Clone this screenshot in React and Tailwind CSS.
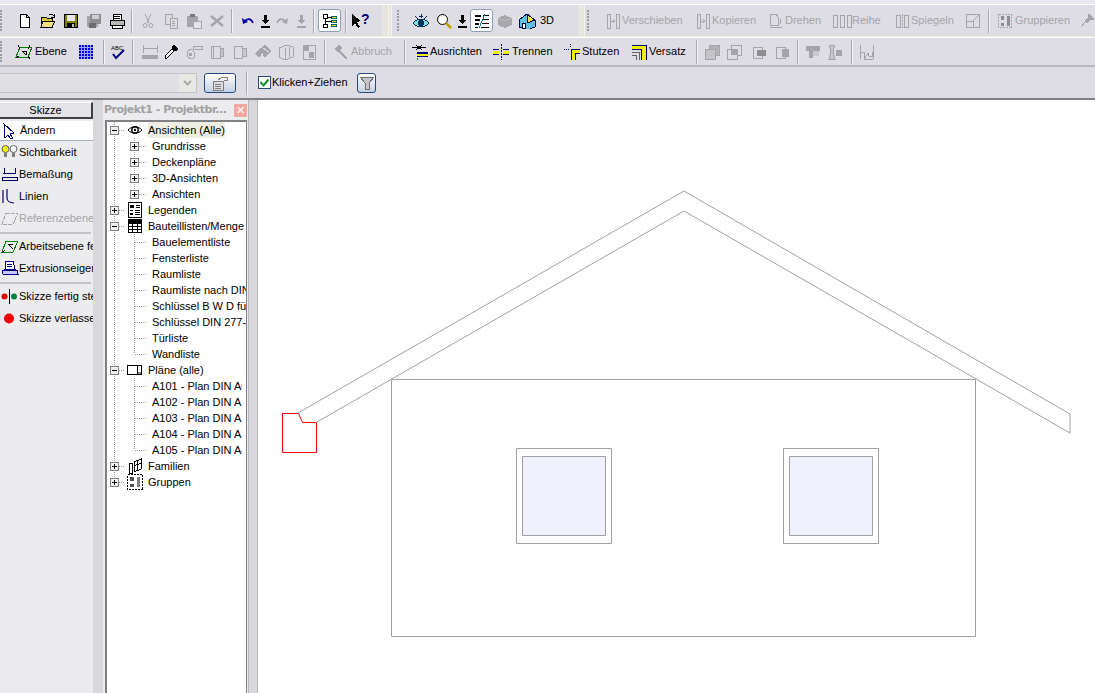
import React from "react";

const DIS = "#a4a4aa";
const DIS2 = "#c9c9cd";

const Svg = ({ children, w = 16, h = 16, smooth }) => (
  <svg width={w} height={h} viewBox={`0 0 ${w} ${h}`} shapeRendering={smooth ? "auto" : "crispEdges"} className="block shrink-0">
    {children}
  </svg>
);

// toolbar icons, roughly pixel drawn
const icons = {
  newFile: <Svg><path d="M3.5 1.5h6l3 3v10h-9z" fill="#fff" stroke="#000" /><path d="M9.5 1.5v3h3" fill="none" stroke="#000" /></Svg>,
  open: <Svg><path d="M1 4h5l1 1h5v9H1z" fill="#e0c040" stroke="#000" /><path d="M3 8h12l-3 6H1z" fill="#f0e080" stroke="#000" /><path d="M9 2l3-1 2 2M14 1v3h-3" fill="none" stroke="#000" /></Svg>,
  save: <Svg><path d="M1.5 1.5h13v13h-13z" fill="#808000" stroke="#000" /><path d="M4 2h8v6H4z" fill="#e8e8e8" /><path d="M4 10h8v5H4z" fill="#000" /><path d="M9 11h2v3H9z" fill="#c0c0c0" /></Svg>,
  saveAll: <Svg><path d="M1 3h11v11H1z" fill={DIS} /><path d="M4 1h11v10H4z" fill="#8e8e92" /><path d="M6 2h7v4H6z" fill="#cfcfd3" /><path d="M3 10h7v5H3z" fill="#6f6f73" /></Svg>,
  print: <Svg><path d="M4 1h8v6H4z" fill="#fff" stroke="#000" /><path d="M1 7h14v5H1z" fill="#b8b8b8" stroke="#000" /><path d="M3 12h10v3H3z" fill="#fff" stroke="#000" /><path d="M5 3h6M5 5h6" stroke="#000" /></Svg>,
  cut: <Svg smooth><path d="M5 1l4 9M11 1L7 10" stroke={DIS} fill="none" /><circle cx="5" cy="12.5" r="2" fill="none" stroke={DIS} /><circle cx="11" cy="12.5" r="2" fill="none" stroke={DIS} /></Svg>,
  copy: <Svg><path d="M2 1h7v10H2z" fill="#dcdce0" stroke={DIS} /><path d="M7 5h7v10H7z" fill="#dcdce0" stroke={DIS} /><path d="M9 8h3M9 10h3M9 12h3" stroke={DIS} /></Svg>,
  paste: <Svg><path d="M1 3h11v11H1z" fill={DIS} /><path d="M4 1h5v3H4z" fill="#77777b" /><path d="M7 8h8v7H7z" fill="#e4e4e8" stroke={DIS} /></Svg>,
  del: <Svg smooth><path d="M2 3l12 10M14 3L2 13" stroke={DIS} strokeWidth="2.4" /></Svg>,
  undo: <Svg w={14} smooth><path d="M2 5l1 6 5-2" fill="#0000a0" /><path d="M4 9c3-4 7-4 9 1" fill="none" stroke="#0000a0" strokeWidth="1.6" /></Svg>,
  down: <Svg w={11}><path d="M4 2h3v5h3L5.5 11 1 7h3zM1 13h9v1.5H1z" fill="#000" /></Svg>,
  redo: <Svg w={14} smooth><path d="M12 5l-1 6-5-2" fill={DIS} /><path d="M10 9C7 5 3 5 1 10" fill="none" stroke={DIS} strokeWidth="1.6" /></Svg>,
  downOff: <Svg w={11}><path d="M4 2h3v5h3L5.5 11 1 7h3zM1 13h9v1.5H1z" fill={DIS} /></Svg>,
  browser: <Svg><path d="M1.5 1.5h4v4h-4zM1.5 11h4v3.500h-4z" fill="#fff" stroke="#000" /><path d="M9.500 3.500h5v2h-5zM9.500 7.500h5v2h-5zM9.500 11.500h5v2h-5z" fill="#e8e840" stroke="#006060" /><path d="M3.500 5.500v6M3.500 8.500h6M5.500 4.500h4" stroke="#000" /></Svg>,
  help: <Svg w={20}><path d="M1 1l9 7-4 1 3 5-2 1-3-5-3 3z" fill="#000" /><text x="10" y="11" fontSize="14" fontWeight="700" fontFamily="Liberation Sans" fill="#000080">?</text></Svg>,
  eye: <Svg w={18}><path d="M1 10c4-5 12-5 16 0-4 5-12 5-16 0z" fill="#80e0e0" stroke="#003060" /><circle cx="9" cy="10" r="3" fill="#003060" /><path d="M9 1v4M3 3l3 3M15 3l-3 3M7 3h4" stroke="#003060" /></Svg>,
  zoom: <Svg smooth><circle cx="6.500" cy="6.500" r="5" fill="#fff" stroke="#000" /><path d="M10 10l5 5" stroke="#c0a000" strokeWidth="2.500" /></Svg>,
  detail: <Svg><path d="M1 2h6v2H1zM1 6h5v2H1zM1 10h4v2H1zM1 14h3v1H1z" fill="#000" /><path d="M9 2h6M9 6h6M8 10h7M7 14h8" stroke="#000" /><path d="M11 1L5 15" stroke="#008080" /></Svg>,
  cube: <Svg><path d="M8 2l7 3v7l-7 3-7-3V5z" fill="#a8a8ac" /><path d="M1 5l7 3 7-3" stroke="#bcbcc0" fill="none" /></Svg>,
  house: <Svg w={18}><path d="M9 1l8 6v7l-8 3-8-3V7z" fill="#60c0e0" stroke="#000040" /><path d="M9 1l8 6-8 3z" fill="#f0e050" stroke="#000040" /><path d="M4 10h3v5H4z" fill="#fff" stroke="#000040" /></Svg>,
  move: <Svg><path d="M2 1h3v14H2zM11 1h3v14h-3z" fill="none" stroke={DIS} /><path d="M6 8h4M8 6l2 2-2 2" stroke={DIS} fill="none" /></Svg>,
  rotate: <Svg><path d="M2 1h6l2 3v8H2z" fill="none" stroke={DIS} /><path d="M2 14h12M12 6v5" stroke={DIS} /></Svg>,
  array: <Svg w={20}><path d="M1 2h4v12H1zM8 2h4v12H8zM15 2h4v12h-4z" fill="none" stroke={DIS} /></Svg>,
  mirror: <Svg><path d="M2 2h4v12H2zM10 2h4v12h-4z" fill="none" stroke={DIS} /><path d="M8 1v14" stroke={DIS} strokeDasharray="2 1" /></Svg>,
  scale: <Svg><path d="M1.500 1.500h13v13h-13zM1.500 8.500h7v6" fill="none" stroke={DIS} /><path d="M8 8l6-6" stroke={DIS} /></Svg>,
  group: <Svg><path d="M1.500 1.500h13v13h-13z" fill="none" stroke={DIS} strokeDasharray="2 1" /><path d="M4 3h3v4H4zM10 3h3v10h-3zM4 10h3v3H4z" fill="#8e8e92" /></Svg>,
  pin: <Svg><path d="M10 1l5 5-4 1-3 3-2-2 3-3zM6 9l-4 5" stroke={DIS} fill={DIS} /></Svg>,
  plane: <Svg w={18}><path d="M5 3h12l-4 10H1z" fill="none" stroke="#008000" /><path d="M3 1l2 4M15 1l-2 4M1 14l3-2M15 15l-2-3" stroke="#000" /><path d="M7 7h4v4" fill="none" stroke="#000" /><path d="M7 7l4 4" stroke="#000" /></Svg>,
  grid: <Svg><path d="M1 1h14v14H1z" fill="#0000e0" /><path d="M3.500 1v14M6.500 1v14M9.500 1v14M12.500 1v14M1 3.500h14M1 6.500h14M1 9.500h14M1 12.500h14" stroke="#a0a0ff" /></Svg>,
  spell: <Svg smooth><text x="1" y="6" fontSize="6" fontFamily="Liberation Sans" fill="#000">ABC</text><path d="M3 10l3 4 8-8" fill="none" stroke="#000080" strokeWidth="2" /></Svg>,
  dim: <Svg w={18}><path d="M1 11h16v4H1z" fill={DIS} /><path d="M2 1v8M16 1v8M2 4h14" stroke={DIS} /></Svg>,
  dropper: <Svg><path d="M11 1l4 4-3 2-3-3zM9 5l2 2-7 7H2v-2z" fill="#fff" stroke="#000" /><path d="M11 2l3 3-2 2-3-3z" fill="#000" /></Svg>,
  wallA: <Svg w={18}><path d="M2 8l4-3 3 3v6l-3 1-3-2zM8 2h9v3H8z" fill="none" stroke={DIS} /><path d="M4 9h3v3H4z" fill={DIS} /></Svg>,
  wallB: <Svg><path d="M2 2h9v12H2z" fill="none" stroke={DIS} /><path d="M4 2v12M11 4h3v8h-3z" stroke={DIS} fill="#c4c4c8" /></Svg>,
  wallC: <Svg><path d="M2 2h8v12H2z" fill="none" stroke={DIS} /><path d="M10 4h4v8h-4z" fill={DIS2} stroke={DIS} /></Svg>,
  wallD: <Svg w={18}><path d="M1 9l6-5 3 3-5 7zM8 3l3-2 6 6-6 7-2-2z" fill={DIS} /><path d="M9 4l6 4" stroke="#dedde3" /></Svg>,
  wallE: <Svg w={18}><path d="M2 4l8-3 6 2v10l-8 3-6-3z" fill="none" stroke={DIS} /><path d="M8 4v11M12 3v10" stroke={DIS} /></Svg>,
  wallF: <Svg><path d="M2 1h12v14H2z" fill="none" stroke={DIS} /><path d="M3 2h5v5H3zM8 8h5v6H8z" fill={DIS} /></Svg>,
  hammer: <Svg><path d="M1 5l5-4 3 3-4 4zM6 6l8 8-1.500 1.500-8-8" fill={DIS} /></Svg>,
  align: <Svg><path d="M0 3.500h14M4 1l3 2.500L4 6M10 1L7 3.500 10 6" stroke="#000" fill="none" /><path d="M5 8h11v1.500H5zM5 11.500h11V13H5z" fill="#000080" /><path d="M5 9.500h11v2H5z" fill="#f0f000" /><path d="M5 14v2" stroke="#008000" /></Svg>,
  split: <Svg><path d="M0 5.500h6M0 10.500h6M10 5.500h6M10 10.500h6" stroke="#000080" /><path d="M0 6.500h6v3H0zM10 6.500h6v3h-6z" fill="#f0f000" /><path d="M8 0v16" stroke="#000080" strokeDasharray="2 1" /></Svg>,
  trim: <Svg><path d="M0 5.500h5M6.500 0v4" stroke="#000080" strokeDasharray="1 1" /><path d="M7 5h9v1H7zM7 9h9v1H7zM7 5h1v11H7zM11 10h1v6h-1z" fill="#000080" /><path d="M8 6h8v3H8zM8 9h3v7H8z" fill="#f0f000" /></Svg>,
  offset: <Svg><path d="M1 1h15v15h-5V6H1z" fill="#f0f000" /><path d="M1 1.500h14.500V16M1 5.500h9.500V16" fill="none" stroke="#000080" /><path d="M1 8.500h7.500V16M1 11.500h4.500V16" fill="none" stroke="#606060" /></Svg>,
  joinA: <Svg><path d="M5 1h10v10H5z" fill="#b4b4b8" stroke={DIS} /><path d="M1 5h10v10H1z" fill="#c4c4c8" stroke={DIS} /></Svg>,
  joinB: <Svg><path d="M5 1h10v10H5z" fill="none" stroke={DIS} /><path d="M1 5h10v10H1z" fill="#dedde3" stroke={DIS} /><path d="M5 5h6v6H5z" fill={DIS} /></Svg>,
  joinC: <Svg><path d="M2 3h9v11H2z" fill="#dedde3" stroke={DIS} /><path d="M6 6h9v6H6z" fill="#8e8e92" /></Svg>,
  joinD: <Svg><path d="M2 3h9v11H2z" fill="#dedde3" stroke={DIS} /><path d="M8 5h7v8H8z" fill={DIS} /></Svg>,
  cutA: <Svg><path d="M1 2h14v5H8v7H4V7H1z" fill={DIS} /><path d="M8 7h6v5H8z" fill="#c8c8cc" /></Svg>,
  cutB: <Svg><path d="M2 1h6l-2 6 2 8H2l2-8z" fill="#c4c4c8" stroke={DIS} /><path d="M9 6h6v6H9z" fill={DIS} /></Svg>,
  height: <Svg><path d="M1.500 1v14M14.500 1v14M1 8h4v7h9" fill="none" stroke={DIS} /><path d="M6 14l3-5 1 3h3V8" fill="none" stroke={DIS} /></Svg>,
  filter: <Svg><path d="M1 2h14l-5 6v6H6V8z" fill="#c4c4c8" stroke="#707074" /></Svg>,
  props: <Svg w={20}><path d="M3 6h10v9H3z" fill="#dcdce0" stroke="#808084" /><path d="M5 9h6M5 11h6M5 13h6" stroke="#808084" /><path d="M8 5l5-3h4v3h-3" fill="none" stroke="#808084" /></Svg>,
};

const Slot = ({ icon, className = "w-[23px]" }) => (
  <div className={`flex h-[22px] shrink-0 items-center justify-center ${className}`}>{icons[icon]}</div>
);

const Sep = ({ className = "w-[8px]" }) => (
  <div className={`flex shrink-0 justify-center ${className}`}>
    <div className="h-[24px] w-[2px] border-l border-[#a8a8ac] bg-white/70" />
  </div>
);

const Tool = ({ icon, label, off, className, gap = "w-[23px]" }) => (
  <div className={`flex shrink-0 items-center ${className}`}>
    <Slot icon={icon} className={gap} />
    <span className={off ? "text-[#a4a4aa]" : "text-black"}>{label}</span>
  </div>
);

const Grip = () => (
  <div className="flex h-[22px] w-[3px] shrink-0 flex-col justify-between">
    {[0, 1, 2, 3, 4, 5, 6].map((n) => (
      <div key={n} className="h-[2px] w-[2px] bg-[#9c9ca0]" />
    ))}
  </div>
);

const Tree = ({ rows }) => (
  <div>
    {rows.map((r) => (
      <div key={r.label} className="flex h-4 items-center overflow-hidden whitespace-nowrap">
        <Prefix {...r} />
        {r.icon && <div className="flex w-[17px] shrink-0 justify-center">{treeIcons[r.icon]}</div>}
        <span className={`ml-[5px] ${r.hl ? "bg-[#efeee3]" : ""} ${r.short ? "max-w-[90px] overflow-hidden" : ""}`}>{r.label}</span>
      </div>
    ))}
  </div>
);

// dotted tree lines plus the +/- box of one row
const Prefix = ({ level, box, end, endOuter }) => {
  const cx = level === 0 ? 7 : 27;
  const w = level === 0 ? 19 : 40;
  return (
    <svg width={w} height="16" viewBox={`0 0 ${w} 16`} shapeRendering="crispEdges" className="block shrink-0">
      <g stroke="#9a9a9a" strokeDasharray="1 1" fill="none">
        {level === 0 && <path d={`M7.500 0V${endOuter ? 8 : 16}`} />}
        {level === 1 && <path d="M7.500 0V16" />}
        {level === 1 && <path d={`M27.500 0V${end ? 8 : 16}`} />}
        <path d={`M${cx + 1} 8.500H${w - 1}`} />
      </g>
      {box && (
        <g>
          <rect x={cx - 4 + 0.5} y="4.500" width="8" height="8" fill="#f0f0f0" stroke="#808080" />
          <path d={`M${cx - 2} 8.500h5`} stroke="#000" />
          {box === "+" && <path d={`M${cx + 0.5} 6v5`} stroke="#000" />}
        </g>
      )}
    </svg>
  );
};

const treeIcons = {
  eye: <Svg smooth><path d="M1 8c3-4 11-4 14 0-3 4-11 4-14 0z" fill="#fff" stroke="#000" /><circle cx="8" cy="8" r="3.200" fill="none" stroke="#000" strokeWidth="1.400" /><circle cx="8" cy="8" r="1.200" fill="#000" /></Svg>,
  legend: <Svg><path d="M1.500 .500h13v15h-13z" fill="#fff" stroke="#000" /><path d="M3 3h4v3H3zM3 8h3v1H3zM3 11h3v2H3z" fill="#000" /><path d="M9 3h4M9 5h4M8 8h5M8 10h5M8 12h5" stroke="#000" /></Svg>,
  table: <Svg><path d="M1.500 1.500h13v13h-13zM1 5.500h14M1 8.500h14M1 11.500h14M5.500 5v10M10.500 5v10" fill="#fff" stroke="#000" /><path d="M2 2h12v3H2z" fill="#000" /></Svg>,
  sheet: <Svg><path d="M.500 3.500h14v9H.500zM10.500 3v10" fill="#fff" stroke="#000" /><path d="M11 10h3v2h-3z" fill="#808080" /></Svg>,
  family: <Svg><path d="M2 5h3v10H2z" fill="#fff" stroke="#000" /><path d="M7 4l7-3v10l-7 3zM10.500 3v10M7 8l7-3" fill="#fff" stroke="#000" /></Svg>,
  group: <Svg><path d="M.500 .500h15v15H.500z" fill="#fff" stroke="#000" strokeDasharray="2 1" /><path d="M3 3h4v4H3zM3 10h4v3H3z" fill="#505050" /><path d="M10 3h3v10h-3z" fill="#808080" /></Svg>,
};

const treeRows = [
  { level: 0, box: "-", icon: "eye", label: "Ansichten (Alle)", hl: true },
  { level: 1, box: "+", label: "Grundrisse" },
  { level: 1, box: "+", label: "Deckenpläne" },
  { level: 1, box: "+", label: "3D-Ansichten" },
  { level: 1, box: "+", label: "Ansichten", end: true },
  { level: 0, box: "+", icon: "legend", label: "Legenden" },
  { level: 0, box: "-", icon: "table", label: "Bauteillisten/Menge" },
  { level: 1, label: "Bauelementliste" },
  { level: 1, label: "Fensterliste" },
  { level: 1, label: "Raumliste" },
  { level: 1, label: "Raumliste nach DIN 277" },
  { level: 1, label: "Schlüssel B W D für Räume" },
  { level: 1, label: "Schlüssel DIN 277-2" },
  { level: 1, label: "Türliste" },
  { level: 1, label: "Wandliste", end: true },
  { level: 0, box: "-", icon: "sheet", label: "Pläne (alle)" },
  { level: 1, label: "A101 - Plan DIN A0", short: true },
  { level: 1, label: "A102 - Plan DIN A1", short: true },
  { level: 1, label: "A103 - Plan DIN A2", short: true },
  { level: 1, label: "A104 - Plan DIN A3", short: true },
  { level: 1, label: "A105 - Plan DIN A4", end: true, short: true },
  { level: 0, box: "+", icon: "family", label: "Familien" },
  { level: 0, box: "+", icon: "group", label: "Gruppen", endOuter: true },
];

const sideIcons = {
  cursor: <Svg><path d="M2 1l10 9-4 1 3 4-2 1-3-4-3 3z" fill="#fff" stroke="#000080" /></Svg>,
  bulbs: <Svg w={18} smooth><circle cx="4.500" cy="5" r="3.500" fill="#f0f000" stroke="#606060" /><circle cx="12.500" cy="5" r="3.500" fill="#fff" stroke="#606060" /><path d="M3 9h3v4H3zM11 9h3v4h-3z" fill="#808080" /></Svg>,
  dim: <Svg w={18}><path d="M1 11.500h15v3H1zM2 7h13M4 2l-1 5M14 2l1 5" fill="none" stroke="#000060" /></Svg>,
  lines: <Svg w={18} smooth><path d="M2 2v13M6 1v9c0 3 3 5 7 5" fill="none" stroke="#000060" strokeWidth="1.200" /></Svg>,
  refPlane: <Svg w={18}><path d="M5 3h12l-5 11H1z" fill="none" stroke="#a8a8ac" strokeDasharray="4 1" /></Svg>,
  plane: <Svg w={18}><path d="M5 3h12l-5 11H1z" fill="none" stroke="#008000" /><path d="M7 6l5 5M7 6h5M1 15l3-3" stroke="#000" /></Svg>,
  extr: <Svg w={18}><path d="M5 1h7l2 8H4z" fill="#fff" stroke="#000080" /><path d="M1 10h15l1 4H2z" fill="#c8c8ff" stroke="#000080" /><path d="M6 4h5M6 6h5" stroke="#000080" /></Svg>,
  finish: <Svg w={18} smooth><circle cx="3.500" cy="8.500" r="3" fill="#e00000" /><path d="M8.500 1v15" stroke="#000" /><circle cx="13" cy="8.500" r="3" fill="#008040" /></Svg>,
  quit: <Svg w={18} smooth><circle cx="8" cy="8.500" r="5" fill="#f00000" /></Svg>,
};

const SideItem = ({ icon, label, off }) => (
  <div className={`flex h-[22px] items-center overflow-hidden whitespace-nowrap ${off ? "text-[#a4a4aa]" : "text-black"}`}>
    <div className="flex w-[19px] shrink-0 justify-center">{sideIcons[icon]}</div>
    {label}
  </div>
);

const Drawing = () => (
  <svg viewBox="258 100 837 593" className="block h-full w-full" fill="none" stroke="#a0a0a0">
    <path d="M298 413L684 191L1070 414V433L684 211L317 422" />
    <path d="M391.500 379.500H975.500V636.500H391.500z" />
    <path d="M516.500 448.500H611.500V543.500H516.500z M783.500 448.500H878.500V543.500H783.500z" />
    <path d="M522.500 456.500H605.500V535.500H522.500z M789.500 456.500H872.500V535.500H789.500z" fill="#f0f0fe" />
    <path d="M282.500 413.500H298.500L302.500 422.500H316.500V452.500H282.500z" stroke="#ff0000" />
  </svg>
);

export default function App() {
  return (
    <div className="flex h-[693px] w-[1095px] flex-col overflow-hidden bg-white font-['Liberation_Sans',sans-serif] text-[11px] text-black">
      {/* top toolbars */}
      <div className="h-[5px] border-b border-white bg-[#e9e8f0]" />

      <div className="flex h-[32px] items-center border-b border-[#efeedd] bg-[#e6e5e0]">
        <div className="flex h-full w-[382px] shrink-0 items-center bg-[#dedde3]">
          <Grip />
          <div className="w-[10px] shrink-0" />
          <Slot icon="newFile" />
          <Slot icon="open" />
          <Slot icon="save" />
          <Slot icon="saveAll" />
          <Slot icon="print" />
          <Sep />
          <Slot icon="cut" />
          <Slot icon="copy" />
          <Slot icon="paste" />
          <Slot icon="del" />
          <Sep />
          <Slot icon="undo" className="w-[21px]" />
          <Slot icon="down" className="w-[16px]" />
          <Slot icon="redo" className="w-[20px]" />
          <Slot icon="downOff" className="w-[16px]" />
          <Sep className="w-[9px]" />
          <div className="flex h-[23px] w-[23px] shrink-0 items-center justify-center rounded-[3px] border border-[#8ea0b4] bg-white">{icons.browser}</div>
          <Sep className="w-[9px]" />
          <Slot icon="help" className="w-[21px]" />
        </div>
        <div className="ml-[6px] h-full w-[4px] shrink-0 border-x border-[#f4f4ec]" />
        <div className="flex h-full w-[186px] shrink-0 items-center bg-[#dedde3] pl-[5px]">
          <Grip />
          <div className="flex items-center pl-[9px]">
            <Slot icon="eye" />
            <Slot icon="zoom" />
            <Slot icon="down" className="w-[15px]" />
            <div className="flex h-[23px] w-[23px] shrink-0 items-center justify-center rounded-[3px] border border-[#8ea0b4] bg-white">{icons.detail}</div>
            <Slot icon="cube" />
            <Slot icon="house" className="w-[21px]" />
            <span className="pl-[3px]">3D</span>
          </div>
        </div>
        <div className="ml-[6px] h-full w-[1px] shrink-0 bg-[#f4f4ec]" />
        <div className="flex h-full flex-1 items-center bg-[#dedde3] pl-[2px]">
          <Grip />
          <div className="flex items-center pl-[13px]">
            <Tool icon="move" label="Verschieben" off className="w-[90px]" gap="w-[19px]" />
            <Tool icon="move" label="Kopieren" off className="w-[73px]" gap="w-[19px]" />
            <Tool icon="rotate" label="Drehen" off className="w-[65px]" gap="w-[19px]" />
            <Tool icon="array" label="Reihe" off className="w-[61px]" gap="w-[21px]" />
            <Tool icon="mirror" label="Spiegeln" off className="w-[71px]" gap="w-[19px]" />
            <Slot icon="scale" className="w-[20px]" />
            <Sep className="w-[12px]" />
            <Tool icon="group" label="Gruppieren" off className="w-[80px]" gap="w-[20px]" />
            <Slot icon="pin" />
          </div>
        </div>
      </div>

      <div className="flex h-[30px] items-center border-t border-white border-b-2 border-b-[#b8b8bc] bg-[#dedde3]">
        <Grip />
        <div className="w-[9px] shrink-0" />
        <Tool icon="plane" label="Ebene" className="w-[62px]" />
        <Slot icon="grid" />
        <Sep className="w-[13px]" />
        <Slot icon="spell" className="w-[16px]" />
        <Sep className="w-[14px]" />
        <Slot icon="dim" className="w-[19px]" />
        <Slot icon="dropper" />
        <Slot icon="wallA" />
        <Slot icon="wallB" />
        <Slot icon="wallC" />
        <Slot icon="wallD" />
        <Slot icon="wallE" />
        <Slot icon="wallF" />
        <Sep className="w-[10px]" />
        <Tool icon="hammer" label="Abbruch" off className="w-[70px]" gap="w-[21px]" />
        <Sep className="w-[10px]" />
        <Tool icon="align" label="Ausrichten" className="w-[80px]" gap="w-[20px]" />
        <Tool icon="split" label="Trennen" className="w-[71px]" gap="w-[22px]" />
        <Tool icon="trim" label="Stutzen" className="w-[67px]" gap="w-[21px]" />
        <Tool icon="offset" label="Versatz" className="w-[63px]" gap="w-[21px]" />
        <Sep className="w-[12px]" />
        <Slot icon="joinA" className="w-[17px]" />
        <Slot icon="joinB" className="w-[27px]" />
        <Slot icon="joinC" />
        <Slot icon="joinD" className="w-[24px]" />
        <Sep className="w-[8px]" />
        <Slot icon="cutA" className="w-[22px]" />
        <Slot icon="cutB" className="w-[22px]" />
        <Sep className="w-[12px]" />
        <Slot icon="height" className="w-[18px]" />
      </div>

      <div className="flex h-[33px] items-center border-b-2 border-b-[#808084] bg-[#dedde3]">
        <div className="flex h-[20px] w-[197px] shrink-0 justify-end border border-l-0 border-[#c4c4c8] bg-[#e0dfe4]">
          <div className="flex w-[17px] items-center justify-center bg-[#e9e9e4]">
            <svg width="9" height="6" viewBox="0 0 9 6"><path d="M1 1l3.500 3.500L8 1" fill="none" stroke="#a8a8ac" strokeWidth="2" /></svg>
          </div>
        </div>
        <div className="ml-[7px] flex h-[20px] w-[32px] shrink-0 items-center justify-center rounded-[3px] border border-[#204c80] bg-gradient-to-b from-white to-[#c4d0e0]">{icons.props}</div>
        <Sep className="w-[22px]" />
        <div className="flex h-[13px] w-[13px] shrink-0 items-center justify-center border border-[#204c80] bg-white">
          <svg width="11" height="11" viewBox="0 0 11 11"><path d="M1.500 5l3 3.500L9.500 2.500" fill="none" stroke="#109030" strokeWidth="2" /></svg>
        </div>
        <span className="ml-[1px] w-[85px]">Klicken+Ziehen</span>
        <div className="flex h-[20px] w-[19px] shrink-0 items-center justify-center rounded-[3px] border border-[#204c80] bg-gradient-to-b from-white to-[#c4d0e0]">{icons.filter}</div>
      </div>

      {/* main area */}
      <div className="flex min-h-0 flex-1">
        <div className="flex w-[93px] shrink-0 flex-col bg-[#ececee]">
          <div className="mt-[2px] flex h-[17px] items-center justify-center border-b-2 border-r-2 border-[#404040] border-t border-t-white bg-[#e4e4e8]">Skizze</div>
          <div className="mt-[2px] flex h-[20px] items-center overflow-hidden border-b border-[#a4b0bc] bg-white">
            <div className="flex w-[20px] shrink-0 justify-center">{sideIcons.cursor}</div>
            Ändern
          </div>
          <div>
            <SideItem icon="bulbs" label="Sichtbarkeit" />
            <SideItem icon="dim" label="Bemaßung" />
            <SideItem icon="lines" label="Linien" />
            <SideItem icon="refPlane" label="Referenzebene" off />
          </div>
          <div className="mb-[1px] mr-[2px] mt-[3px] border-t-2 border-[#c4c4c8]" />
          <SideItem icon="plane" label="Arbeitsebene festlegen" />
          <SideItem icon="extr" label="Extrusionseigenschaften" />
          <div className="mb-[1px] mr-[2px] mt-[3px] border-t-2 border-[#c4c4c8]" />
          <SideItem icon="finish" label="Skizze fertig stellen" />
          <SideItem icon="quit" label="Skizze verlassen" />
        </div>

        <div className="w-[10px] shrink-0 bg-[#d8d8dc]" />

        <div className="flex w-[145px] shrink-0 flex-col bg-[#ececee]">
          <div className="flex h-[20px] items-center justify-between px-[1px]">
            <span className="whitespace-nowrap font-['DejaVu_Sans',sans-serif] text-[11px] font-bold tracking-[-0.5px] text-[#a0a0a4]">Projekt1 - Projektbr...</span>
            <div className="flex h-[13px] w-[13px] shrink-0 items-center justify-center bg-[#f0a8a0] text-[11px] leading-none text-white">✕</div>
          </div>
          <div className="ml-[2px] mr-[1px] min-h-0 flex-1 overflow-hidden border-l-2 border-r border-t-2 border-[#808084] bg-white">
            <Tree rows={treeRows} />
          </div>
        </div>

        <div className="w-[10px] shrink-0 border-x border-[#b8b8bc] bg-[#d8d8dc]" />

        <div className="min-w-0 flex-1 bg-white">
          <Drawing />
        </div>
      </div>
    </div>
  );
}
